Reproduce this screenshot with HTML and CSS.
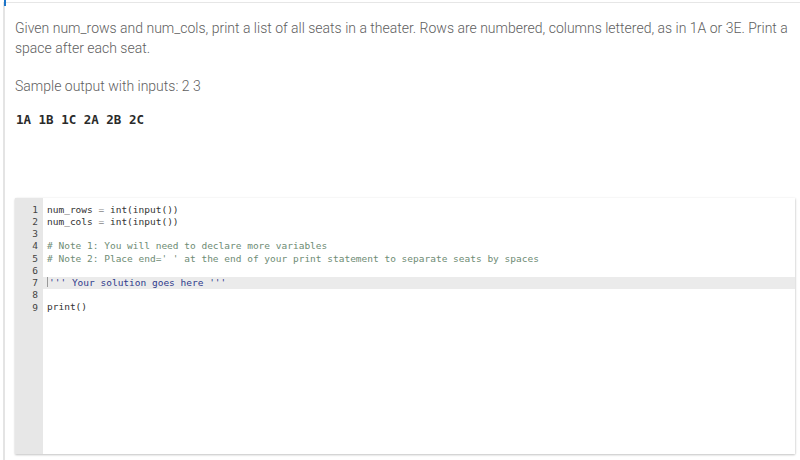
FILE: index.html
```html
<!DOCTYPE html>
<html>
<head>
<meta charset="utf-8">
<link rel="stylesheet" href="styles.css">
</head>
<body>
<div class="frame">
  <span class="mark"></span>
  <div class="content">
    <p class="desc">Given num_rows and num_cols, print a list of all seats in a theater. Rows are numbered, columns lettered, as in 1A or 3E. Print a space after each seat.</p>
    <p class="label">Sample output with inputs: 2 3</p>
    <pre class="sample">1A 1B 1C 2A 2B 2C </pre>
    <div class="editor">
      <div class="gutter">
        <div class="ln">1</div><div class="ln">2</div><div class="ln">3</div><div class="ln">4</div><div class="ln">5</div><div class="ln">6</div><div class="ln">7</div><div class="ln">8</div><div class="ln">9</div>
      </div>
      <div class="code">
        <div class="line">num_rows <span class="op">=</span> int(input())</div>
        <div class="line">num_cols <span class="op">=</span> int(input())</div>
        <div class="line"> </div>
        <div class="line cm"># Note 1: You will need to declare more variables</div>
        <div class="line cm"># Note 2: Place end=' ' at the end of your print statement to separate seats by spaces</div>
        <div class="line"> </div>
        <div class="line active"><span class="cursor"></span><span class="str">''' Your solution goes here '''</span></div>
        <div class="line"> </div>
        <div class="line">print()</div>
      </div>
    </div>
  </div>
</div>
</body>
</html>
```

FILE: styles.css
```css
html, body {
  margin: 0;
  padding: 0;
  background: #ffffff;
}

.frame {
  position: relative;
  margin: 2px 0 0 3px;
  height: 458px;
  box-sizing: border-box;
  border-top: 1px solid #e6e6e6;
  border-left: 2px solid #e4e4e4;
}

.mark {
  position: absolute;
  left: -1px;
  top: -3px;
  width: 2px;
  height: 6px;
  background: #1c75c9;
}

.content {
  padding: 16px 0 0 10px;
}

.desc {
  margin: 0;
  width: 775px;
  font-family: Roboto, "Liberation Sans", sans-serif;
  font-weight: 300;
  font-size: 14px;
  line-height: 19.5px;
  color: #606060;
}

.label {
  margin: 18.5px 0 0 0;
  font-family: Roboto, "Liberation Sans", sans-serif;
  font-weight: 300;
  font-size: 14px;
  line-height: 19.5px;
  color: #606060;
}

.sample {
  margin: 15.5px 0 0 1px;
  font-family: "DejaVu Sans Mono", "Liberation Mono", monospace;
  font-size: 12.5px;
  line-height: 16px;
  font-weight: 600;
  color: #2a2a2a;
}

.editor {
  display: flex;
  margin-top: 70px;
  width: 780px;
  height: 256px;
  background: #ffffff;
  box-shadow: 0 1px 2px rgba(0, 0, 0, 0.22), 1px 0 2px rgba(0, 0, 0, 0.06);
}

.gutter {
  width: 28px;
  flex: none;
  background: #e7e7e7;
  padding-top: 6px;
  box-sizing: border-box;
}

.ln {
  height: 12.25px;
  line-height: 12.25px;
  text-align: right;
  padding-right: 5px;
  font-family: "DejaVu Sans Mono", "Liberation Mono", monospace;
  font-size: 9.5px;
  color: #444444;
}

.code {
  flex: 1;
  padding-top: 6px;
}

.line {
  height: 12.25px;
  line-height: 12.25px;
  padding-left: 4px;
  white-space: pre;
  font-family: "DejaVu Sans Mono", "Liberation Mono", monospace;
  font-size: 9.5px;
  color: #333333;
}

.op {
  color: #888888;
}

.cm {
  color: #6e8c74;
}

.str {
  color: #2f3a8c;
}

.active {
  background: #ebebeb;
  height: 11.5px;
  margin-top: 0.4px;
}

.cursor {
  display: inline-block;
  width: 1px;
  height: 10px;
  margin-right: 1px;
  vertical-align: -1px;
  background: #999999;
}
```
